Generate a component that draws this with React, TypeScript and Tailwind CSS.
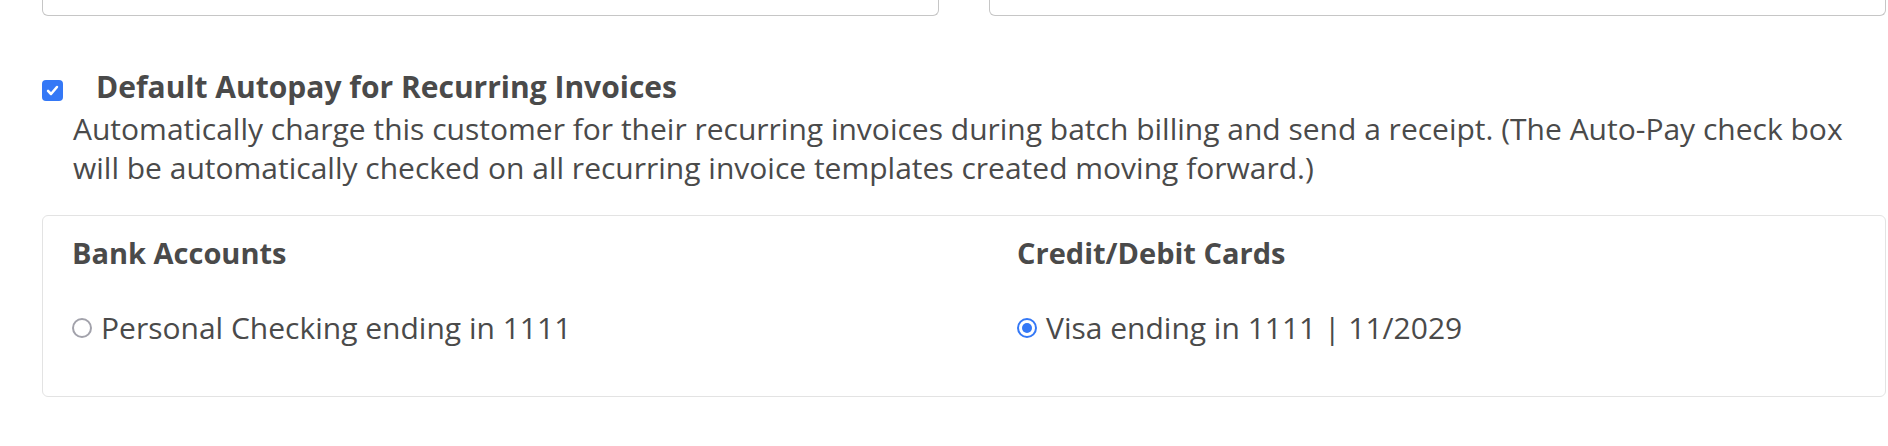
import * as React from "react";

const text = "text-[#4a4a4a]";

const Radio: React.FC<{ checked?: boolean }> = ({ checked }) =>
  checked ? (
    <span className="flex h-[20px] w-[20px] shrink-0 items-center justify-center rounded-full border-[2px] border-[#3478f6] bg-white">
      <span className="h-[10px] w-[10px] rounded-full bg-[#3478f6]" />
    </span>
  ) : (
    <span className="h-[20px] w-[20px] shrink-0 rounded-full border-[2.5px] border-[#a2a2ab] bg-white" />
  );

const Option: React.FC<{ label: string; checked?: boolean }> = ({ label, checked }) => (
  <label className="flex items-center gap-[9px] text-[30px] leading-[40px]">
    <Radio checked={checked} />
    <span>{label}</span>
  </label>
);

export default function App() {
  return (
    <div
      className={`h-[446px] w-[1888px] overflow-hidden bg-white pl-[42px] pr-[2px] ${text}`}
      style={{ fontFamily: '"Open Sans", "Liberation Sans", sans-serif' }}
    >
      {/* bottom edges of the inputs above */}
      <div className="grid grid-cols-2 gap-[50px]">
        <div className="h-[16px] rounded-b-[6px] border-x border-b border-[#c6c6c6]" />
        <div className="h-[16px] rounded-b-[6px] border-x border-b border-[#c6c6c6]" />
      </div>

      <div className="mt-[51px] flex items-start gap-[33px]">
        <span className="mt-[13px] flex h-[21px] w-[21px] shrink-0 items-center justify-center rounded-[4px] bg-[#3478f6]">
          <svg viewBox="0 0 16 16" className="h-[17px] w-[17px]" fill="none">
            <path d="M3.8 8.4l2.8 2.9 5.6-6.6" stroke="white" strokeWidth="2.4" strokeLinecap="round" strokeLinejoin="round" />
          </svg>
        </span>
        <h4 className="text-[30px] font-bold leading-[40px]">Default Autopay for Recurring Invoices</h4>
      </div>
      <p className="mt-[2px] pl-[31px] text-[30px] leading-[39px]">
        Automatically charge this customer for their recurring invoices during batch billing and send a receipt. (The
        Auto-Pay check box will be automatically checked on all recurring invoice templates created moving forward.)
      </p>

      <div className="mt-[28px] grid grid-cols-[945px_1fr] rounded-[6px] border border-[#e3e3e3] pb-[48px] pl-[29px] pt-[18px]">
        <div>
          <h5 className="text-[29px] font-bold leading-[38px]">Bank Accounts</h5>
          <div className="mt-[36px]">
            <Option label="Personal Checking ending in 1111" />
          </div>
        </div>
        <div>
          <h5 className="text-[29px] font-bold leading-[38px]">Credit/Debit Cards</h5>
          <div className="mt-[36px]">
            <Option label="Visa ending in 1111 | 11/2029" checked />
          </div>
        </div>
      </div>
    </div>
  );
}
